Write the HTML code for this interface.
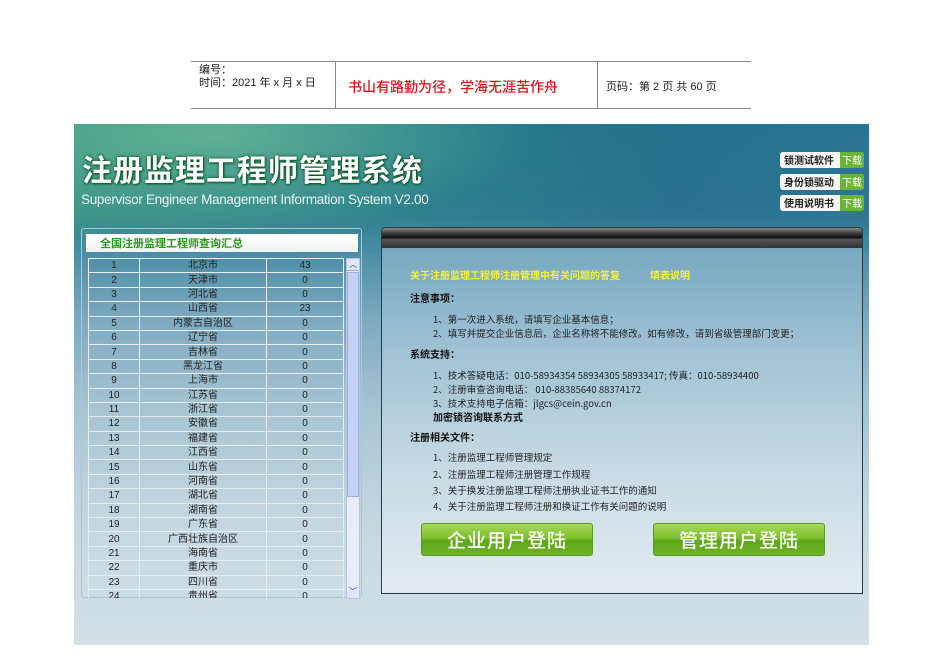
<!DOCTYPE html>
<html><head><meta charset="utf-8"><style>
*{margin:0;padding:0;box-sizing:border-box}
body{width:950px;height:672px;background:#fff;position:relative;overflow:hidden;font-family:"Liberation Sans","Noto Sans CJK SC",sans-serif}
.abs{position:absolute}
.hdr{left:191px;top:61px;width:560px;height:48px;border-top:1px solid #888;border-bottom:1px solid #888;font-size:11px;color:#222}
.vl{position:absolute;top:0;bottom:0;width:1px;background:#888}
#main{left:74px;top:124px;width:795px;height:521px;background:linear-gradient(180deg,#2c7f8a 0%,#32808e 15%,#4e8ea6 25%,#7faac0 38%,#a7c4d3 55%,#c3d6df 75%,#d3e1e7 100%);overflow:hidden}
.top{position:absolute;left:0;top:0;width:795px;height:130px;background:radial-gradient(ellipse 320px 100px at 140px 10px,rgba(130,210,160,.55),rgba(0,0,0,0)),linear-gradient(90deg,rgba(60,150,130,.8),rgba(40,128,140,.5) 40%,rgba(30,100,140,.5) 75%,rgba(40,110,150,.6));-webkit-mask-image:linear-gradient(#000 70%,transparent);mask-image:linear-gradient(#000 70%,transparent)}
.title{left:8px;top:22px;font-size:30px;font-weight:bold;color:#fff;letter-spacing:1px;text-shadow:0 0 3px #0a4a10,1px 1px 2px #063;font-family:"Noto Sans CJK SC",sans-serif}
.sub{left:7px;top:68px;font-size:13.5px;color:#e8f4f4;letter-spacing:-.3px}
.dl{left:706px;width:84px;height:16px;background:#f6f6f6;border-radius:3px;font-size:10px;font-weight:bold;color:#222;padding-left:4px;line-height:16px;font-family:"Noto Sans CJK SC",sans-serif;overflow:hidden}
.dl span{position:absolute;right:0;top:0;width:24px;height:16px;background:#6db33a;color:#fff;text-align:center;font-weight:normal}
#lp{left:7px;top:104px;width:281px;height:370px;border:1px solid #a9c7cf;border-radius:3px}
#lp .cap{position:absolute;left:4px;top:5px;width:272px;height:18px;background:linear-gradient(#fff,#eef3ef);font-size:11px;font-weight:bold;color:#2a9a1a;padding-left:14px;line-height:18px;font-family:"Noto Sans CJK SC",sans-serif}
.tw{position:absolute;left:6px;top:29px;width:256px;height:340px;overflow:hidden}
table{border-collapse:collapse;font-size:10px;color:#222}
td{border:1px solid #e6eef0;height:14.4px;line-height:13px;text-align:center;padding:0}
.sb{left:264px;top:29px;width:14px;height:341px;background:#e8ecf8;border:1px solid #b8c4dc}
#rp{left:307px;top:103px;width:482px;height:367px;border:1px solid #2a3a44;border-radius:4px 4px 0 0;background:linear-gradient(180deg,#6fa2bb 0%,#9abfd2 30%,#c6d9e3 65%,#e3ecf0 100%)}
#rp .bar{position:absolute;left:0;top:0;width:480px;height:20px;background:linear-gradient(#888 0%,#333 30%,#111 50%,#555 55%,#333 100%);border-radius:4px 4px 0 0}
.t{position:absolute;font-size:9.5px;color:#222;white-space:nowrap;font-family:"Noto Sans CJK SC",sans-serif}
.b{font-weight:bold;font-size:10px;color:#111}
.y{color:#f6f23a;font-weight:bold;font-size:10px}
.btn{position:absolute;width:172px;height:33px;border-radius:3px;background:linear-gradient(#a9d85a 0%,#7cbf2c 45%,#5ea51a 55%,#6db526 100%);border:1px solid #5a9a20;color:#fff;font-size:19px;font-weight:500;text-align:center;line-height:32px;letter-spacing:1px;font-family:"Noto Sans CJK SC",sans-serif}
</style></head><body>
<div class="abs hdr">
 <div class="vl" style="left:144px"></div><div class="vl" style="left:406px"></div>
 <div class="abs" style="left:8px;top:2px;line-height:13px">编号：<br>时间：2021 年 x 月 x 日</div>
 <div class="abs" style="left:157px;top:15px;color:#e0141a;font-size:14px;font-weight:500;font-family:'Noto Sans CJK SC',sans-serif">书山有路勤为径，学海无涯苦作舟</div>
 <div class="abs" style="left:415px;top:16px">页码：第 2 页 共 60 页</div>
</div>
<div id="main" class="abs">
 <div class="top"></div>
 <div class="abs title">注册监理工程师管理系统</div>
 <div class="abs sub">Supervisor Engineer Management Information System V2.00</div>
 <div class="abs dl" style="top:28px">锁测试软件<span>下载</span></div>
 <div class="abs dl" style="top:50px">身份锁驱动<span>下载</span></div>
 <div class="abs dl" style="top:71px">使用说明书<span>下载</span></div>
 <div id="lp" class="abs">
  <div class="cap">全国注册监理工程师查询汇总</div>
  <div class="tw"><table>
  <colgroup><col style="width:51px"><col style="width:127px"><col style="width:77px"></colgroup>
  <tr><td>1</td><td>北京市</td><td>43</td></tr><tr><td>2</td><td>天津市</td><td>0</td></tr><tr><td>3</td><td>河北省</td><td>0</td></tr><tr><td>4</td><td>山西省</td><td>23</td></tr><tr><td>5</td><td>内蒙古自治区</td><td>0</td></tr><tr><td>6</td><td>辽宁省</td><td>0</td></tr><tr><td>7</td><td>吉林省</td><td>0</td></tr><tr><td>8</td><td>黑龙江省</td><td>0</td></tr><tr><td>9</td><td>上海市</td><td>0</td></tr><tr><td>10</td><td>江苏省</td><td>0</td></tr><tr><td>11</td><td>浙江省</td><td>0</td></tr><tr><td>12</td><td>安徽省</td><td>0</td></tr><tr><td>13</td><td>福建省</td><td>0</td></tr><tr><td>14</td><td>江西省</td><td>0</td></tr><tr><td>15</td><td>山东省</td><td>0</td></tr><tr><td>16</td><td>河南省</td><td>0</td></tr><tr><td>17</td><td>湖北省</td><td>0</td></tr><tr><td>18</td><td>湖南省</td><td>0</td></tr><tr><td>19</td><td>广东省</td><td>0</td></tr><tr><td>20</td><td>广西壮族自治区</td><td>0</td></tr><tr><td>21</td><td>海南省</td><td>0</td></tr><tr><td>22</td><td>重庆市</td><td>0</td></tr><tr><td>23</td><td>四川省</td><td>0</td></tr><tr><td>24</td><td>贵州省</td><td>0</td></tr>
  </table></div>
  <div class="abs sb"><div class="abs" style="left:0;top:0;width:12px;height:12px;background:#dde6fa;border-bottom:1px solid #aab;font-size:8px;text-align:center;color:#335">︿</div><div class="abs" style="left:0;top:13px;width:12px;height:225px;background:#c3d2f4;border:1px solid #9fb3e0"></div><div class="abs" style="left:0;bottom:0;width:12px;height:12px;background:#dde6fa;font-size:8px;text-align:center;color:#335">﹀</div></div>
 </div>
 <div id="rp" class="abs">
  <div class="bar"></div>
  <div class="t y" style="left:28px;top:39px">关于注册监理工程师注册管理中有关问题的答复　　　填表说明</div>
  <div class="t b" style="left:28px;top:62px">注意事项：</div>
  <div class="t" style="left:51px;top:84px">1、第一次进入系统，请填写企业基本信息；</div>
  <div class="t" style="left:51px;top:98px">2、填写并提交企业信息后，企业名称将不能修改。如有修改，请到省级管理部门变更；</div>
  <div class="t b" style="left:28px;top:118px">系统支持：</div>
  <div class="t" style="left:51px;top:140px">1、技术答疑电话：010-58934354 58934305 58933417; 传真：010-58934400</div>
  <div class="t" style="left:51px;top:154px">2、注册审查咨询电话： 010-88385640 88374172</div>
  <div class="t" style="left:51px;top:168px">3、技术支持电子信箱：jlgcs@cein.gov.cn</div>
  <div class="t b" style="left:51px;top:181px">加密锁咨询联系方式</div>
  <div class="t b" style="left:28px;top:201px">注册相关文件：</div>
  <div class="t" style="left:51px;top:222px">1、注册监理工程师管理规定</div>
  <div class="t" style="left:51px;top:239px">2、注册监理工程师注册管理工作规程</div>
  <div class="t" style="left:51px;top:255px">3、关于换发注册监理工程师注册执业证书工作的通知</div>
  <div class="t" style="left:51px;top:271px">4、关于注册监理工程师注册和换证工作有关问题的说明</div>
  <div class="btn" style="left:39px;top:295px">企业用户登陆</div>
  <div class="btn" style="left:271px;top:295px">管理用户登陆</div>
 </div>
</div>
</body></html>
